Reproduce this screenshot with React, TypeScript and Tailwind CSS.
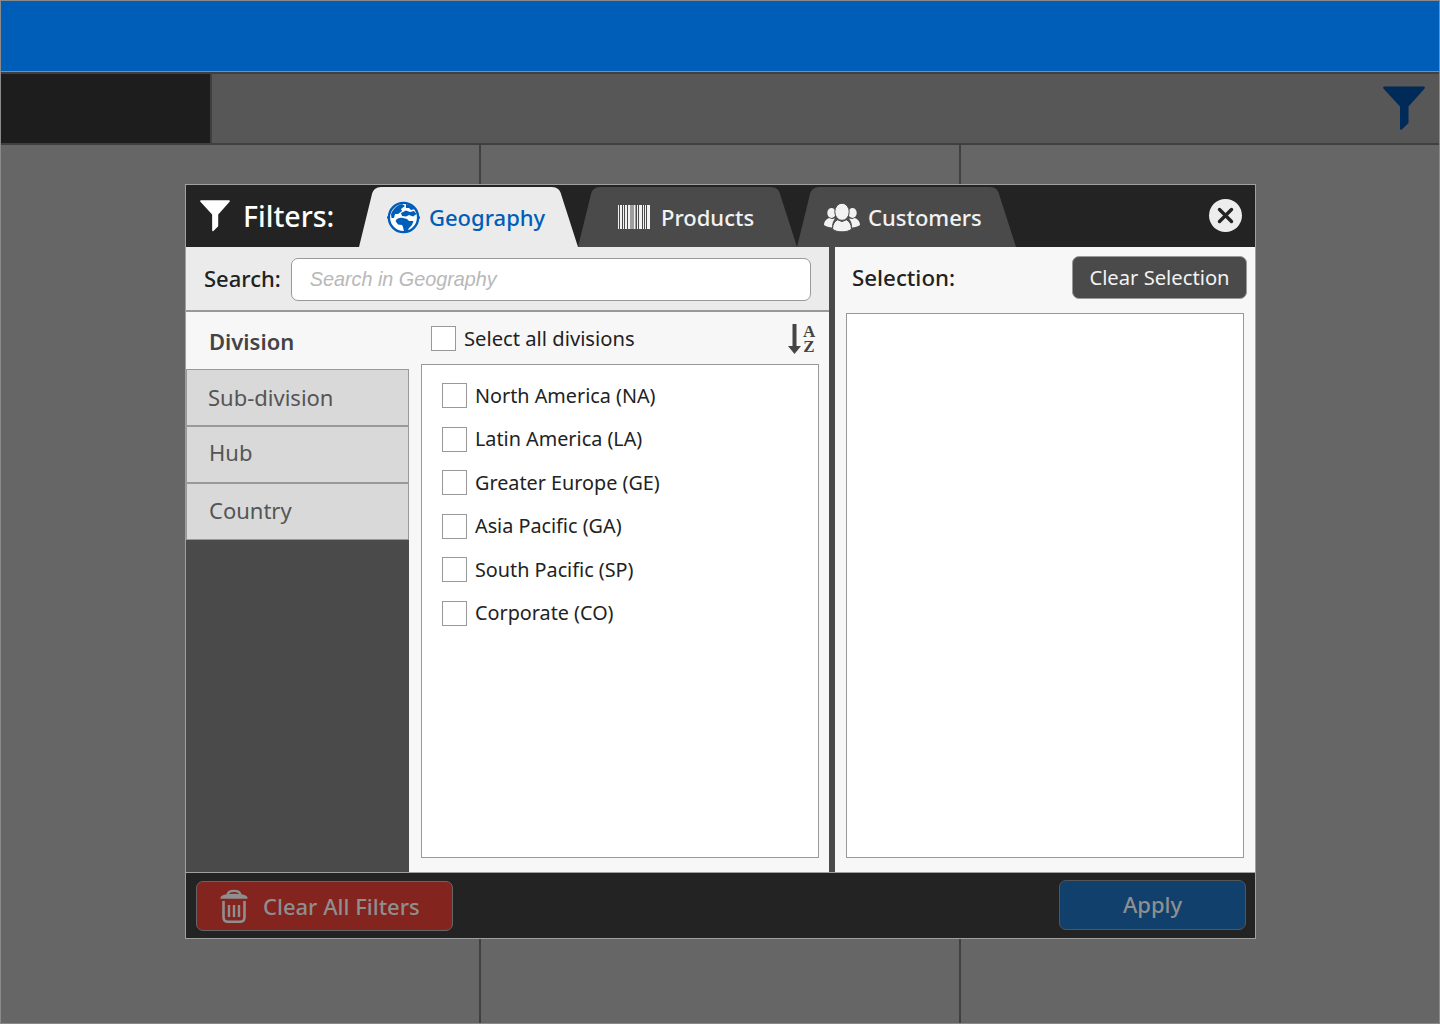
import React from "react";

const font = "font-['Noto_Sans','Open_Sans',sans-serif]";

function Funnel({ className }: { className: string }) {
  return (
    <svg viewBox="0 0 42 44" className={className} fill="currentColor">
      <path d="M1.5 0.5 H40.5 C41.8 0.5 42.3 1.8 41.4 2.8 L25.5 20.5 V37 L18.8 43.6 C18 44.2 17 43.8 17 42.6 V20.5 L0.6 2.8 C-0.3 1.8 0.2 0.5 1.5 0.5 Z" />
    </svg>
  );
}

function Globe() {
  return (
    <svg width="33" height="33" viewBox="0 0 33 33" fill="#005eb8">
      <circle cx="16.5" cy="16.5" r="14.6" fill="#fff" stroke="#005eb8" strokeWidth="2.4" />
      <path d="M0 16.5 H3 M30 16.5 H33" stroke="#005eb8" strokeWidth="2" />
      {/* upper left land */}
      <path d="M4 13 C6 8 10 4 15 3 L18 5 L14 8 L15 10 L11 13 L8 13 L7 17 L4.5 17 Z" />
      {/* top right */}
      <path d="M19 3 C23 3.5 26 5.5 28 8 L24 9 L22 7 L19 7 Z" />
      {/* europe */}
      <path d="M14 12 L19 9.5 L23 11 L27 10 L29.5 13 L26 15.5 L22 14 L19 15.5 L15 15 Z" />
      {/* africa */}
      <path d="M8.5 20 C10 17 13 16.5 16 17 L20 18 L22 20 L26.5 20 L25 24 L22 27 L20.5 30.5 L17 30.5 L16 26 L15 24 L11 23.5 Z" />
    </svg>
  );
}

function Barcode() {
  const bars = [
    [0, 1], [2, 2], [5, 1], [7, 2], [10, 2.5], [13.5, 1], [15.5, 2], [19, 1],
    [21, 3], [25, 1], [27, 1], [29, 3],
  ];
  return (
    <svg width="33" height="24" viewBox="0 0 33 24" fill="#f2f2f2">
      {bars.map(([x, w]) => (
        <rect key={x} x={x} y="0" width={w} height="24" />
      ))}
    </svg>
  );
}

function People() {
  return (
    <svg width="36" height="29" viewBox="0 0 36 29" fill="#f2f2f2">
      <ellipse cx="7.5" cy="10" rx="4.2" ry="5" />
      <ellipse cx="28.5" cy="10" rx="4.2" ry="5" />
      <path d="M0 22 C0 18.5 2.5 16 5 15 L8 16 L11 15.5 C9 18 8 20.5 8 24.5 C5 24.5 2 23.5 0 22 Z" />
      <path d="M36 22 C36 18.5 33.5 16 31 15 L28 16 L25 15.5 C27 18 28 20.5 28 24.5 C31 24.5 34 23.5 36 22 Z" />
      <ellipse cx="18" cy="8.8" rx="7.2" ry="8.6" stroke="#4a4a4a" strokeWidth="1" />
      <path d="M8.5 26 C8.5 21 11 18 13.5 16.8 L18 18.5 L22.5 16.8 C25 18 27.5 21 27.5 26 C24 29.8 12 29.8 8.5 26 Z" stroke="#4a4a4a" strokeWidth="1" />
    </svg>
  );
}

function Trash() {
  return (
    <svg width="28" height="34" viewBox="0 0 28 34" fill="none" stroke="#8f8f8f">
      <path d="M7.5 6 C8 0.5 20 0.5 20.5 6" strokeWidth="2.4" />
      <path d="M1 9 C1.5 6.5 5 5.5 14 5.5 C23 5.5 26.5 6.5 27 9 Z" fill="#8f8f8f" strokeWidth="1.4" strokeLinejoin="round" />
      <path d="M3.5 12 V28 C3.5 31.5 5 32.8 8 32.8 H20 C23 32.8 24.5 31.5 24.5 28 V12" strokeWidth="2.6" />
      <path d="M9 16 V28 M14 16 V28 M19 16 V28" strokeWidth="2.4" />
    </svg>
  );
}

function Tab({
  label,
  icon,
  active,
  gap,
  pad,
}: {
  label: string;
  icon: React.ReactNode;
  active?: boolean;
  gap: string;
  pad: string;
}) {
  return (
    <div className={`relative flex h-[60px] w-[219px] shrink-0 items-center ${pad} ${gap}`}>
      <svg viewBox="0 0 219 60" className="absolute inset-0 h-full w-full" fill={active ? "#ebebeb" : "#4a4a4a"}>
        <path d="M0 60 L13 7 C14 3 17 0 22 0 H193 C198 0 201 3 202 7 L219 60 Z" />
      </svg>
      <div className="relative shrink-0">{icon}</div>
      <span className={`relative text-[22px] leading-none font-medium ${active ? "text-[#005eb8]" : "text-[#f2f2f2]"}`}>
        {label}
      </span>
    </div>
  );
}

function Check({ label }: { label: string }) {
  return (
    <div className="flex h-[25px] items-center gap-2">
      <span className="h-[25px] w-[25px] shrink-0 border border-[#999] bg-white" />
      <span className="text-[19.8px] leading-none text-[#222]">{label}</span>
    </div>
  );
}

export default function App() {
  const divisions = [
    "North America (NA)",
    "Latin America (LA)",
    "Greater Europe (GE)",
    "Asia Pacific (GA)",
    "South Pacific (SP)",
    "Corporate (CO)",
  ];

  return (
    <div className={`relative flex h-[1024px] w-[1440px] flex-col overflow-hidden border border-[#8a8a8a] bg-[#666] ${font}`}>
      <div className="h-[71px] border-b border-[#8a8a8a] bg-[#005eb8]" />
      <div className="flex h-[73px] border-y-2 border-[#404040] bg-[#575757]">
        <div className="w-[211px] border-r-2 border-[#404040] bg-[#1d1d1d]" />
        <div className="flex flex-1 justify-end pt-[12px] pr-[14px]">
          <Funnel className="h-[44px] w-[42px] text-[#002a57]" />
        </div>
      </div>
      <div className="grid flex-1 grid-cols-[480px_480px_1fr]">
        <div className="border-r-2 border-[#404040]" />
        <div className="border-r-2 border-[#404040]" />
        <div />
      </div>

      {/* Modal */}
      <div className="absolute top-[183px] left-[184px] flex h-[755px] w-[1071px] flex-col border border-[#a0a0a0] bg-[#232323]">
        <div className="flex h-[62px] shrink-0 items-end">
          <div className="flex h-[62px] w-[173px] shrink-0 items-center pb-[1px] pl-[14px]">
            <Funnel className="h-[33px] w-[30px] text-white" />
            <span className="ml-[13px] pt-[2px] text-[28.5px] leading-none font-medium text-white">Filters:</span>
          </div>
          <div className="flex">
            <Tab label="Geography" active gap="gap-[9px]" pad="pl-[28px]" icon={<Globe />} />
            <Tab label="Products" gap="gap-[10px]" pad="pl-[40px]" icon={<Barcode />} />
            <Tab label="Customers" gap="gap-[8px]" pad="pl-[27px]" icon={<People />} />
          </div>
          <div className="flex flex-1 justify-end self-center pr-[13px] pb-[2px]">
            <div className="flex h-[33px] w-[33px] items-center justify-center rounded-full bg-[#ededed]">
              <svg width="17" height="17" viewBox="0 0 17 17" stroke="#232323" strokeWidth="3.4" strokeLinecap="round">
                <path d="M2.5 2.5 L14.5 14.5 M14.5 2.5 L2.5 14.5" />
              </svg>
            </div>
          </div>
        </div>

        <div className="flex min-h-0 flex-1">
          {/* Left panel */}
          <div className="flex w-[643px] flex-col bg-[#f7f7f7]">
            <div className="flex h-[65px] shrink-0 items-center border-b-2 border-[#999] bg-[#ebebeb] px-[18px] pt-[2px]">
              <span className="mr-[10px] -mt-[4px] text-[22px] leading-none font-medium text-[#222]">Search:</span>
              <div className="flex h-[43px] flex-1 items-center rounded-[7px] border border-[#999] bg-white pl-[18px]">
                <span className="font-['Liberation_Sans',sans-serif] text-[19.8px] text-[#b8b8b8] italic">Search in Geography</span>
              </div>
            </div>
            <div className="flex min-h-0 flex-1">
              <div className="flex w-[223px] flex-col bg-[#4a4a4a]">
                <div className="flex h-[57px] items-center bg-[#f7f7f7] pl-[23px] text-[22px] leading-none font-semibold text-[#444]">
                  Division
                </div>
                <div className="flex h-[57px] items-center border border-[#999] bg-[#d9d9d9] pb-[1px] pl-[21px] text-[22px] leading-none text-[#555]">
                  Sub-division
                </div>
                <div className="flex h-[57px] items-center border border-[#999] bg-[#d9d9d9] pb-[6px] pl-[22px] text-[22px] leading-none text-[#555]">
                  Hub
                </div>
                <div className="flex h-[57px] items-center border border-[#999] bg-[#d9d9d9] pb-[4px] pl-[22px] text-[22px] leading-none text-[#555]">
                  Country
                </div>
              </div>
              <div className="flex flex-1 flex-col pr-[10px] pb-[14px] pl-[12px]">
                <div className="flex h-[52px] shrink-0 items-center justify-between pr-[5px] pl-[10px]">
                  <div className="flex h-[25px] items-center gap-2">
                    <span className="h-[25px] w-[25px] shrink-0 border border-[#999] bg-white" />
                    <span className="text-[20.2px] leading-none text-[#222]">Select all divisions</span>
                  </div>
                  <div className="mt-[2px] -mr-[1px] flex items-center gap-[2px]">
                    <svg width="13" height="30" viewBox="0 0 13 30" fill="#444">
                      <path d="M4.5 0 H8.5 V22 H13 L6.5 30 L0 22 H4.5 Z" />
                    </svg>
                    <div className="w-[12px] text-center font-['Liberation_Serif',serif] text-[17px] leading-[15px] font-bold text-[#444]">
                      A Z
                    </div>
                  </div>
                </div>
                <div className="flex flex-1 flex-col gap-[18.5px] border border-[#999] bg-white pt-[18px] pl-[20px]">
                  {divisions.map((d) => (
                    <Check key={d} label={d} />
                  ))}
                </div>
              </div>
            </div>
          </div>

          <div className="w-[6px] bg-[#4a4a4a]" />

          {/* Selection */}
          <div className="flex flex-1 flex-col bg-[#f7f7f7] pr-[11px] pb-[14px] pl-[11px]">
            <div className="flex h-[66px] shrink-0 items-center justify-between pb-[5px] pl-[6px]">
              <span className="pt-[2px] text-[22.3px] leading-none font-medium text-[#222]">Selection:</span>
              <button className="-mr-[3px] h-[43px] w-[175px] rounded-[7px] border border-[#999] bg-[#4a4a4a] text-[20.2px] text-[#f2f2f2]">
                Clear Selection
              </button>
            </div>
            <div className="flex-1 border border-[#999] bg-white" />
          </div>
        </div>

        {/* Footer */}
        <div className="flex h-[66px] shrink-0 items-center justify-between border-t border-[#a0a0a0] bg-[#232323] pr-[9px] pl-[10px]">
          <button className="flex h-[50px] w-[257px] items-center gap-[15px] rounded-[7px] border border-[#666] bg-[#84241f] pl-[23px] text-[22px] leading-none font-medium text-[#8f8f8f]">
            <Trash />
            <span>Clear All Filters</span>
          </button>
          <button className="mb-[2px] h-[50px] w-[187px] rounded-[7px] border border-[#555] bg-[#11406d] pb-[2px] text-[22px] leading-none font-medium text-[#8f8f8f]">
            Apply
          </button>
        </div>
      </div>
    </div>
  );
}
